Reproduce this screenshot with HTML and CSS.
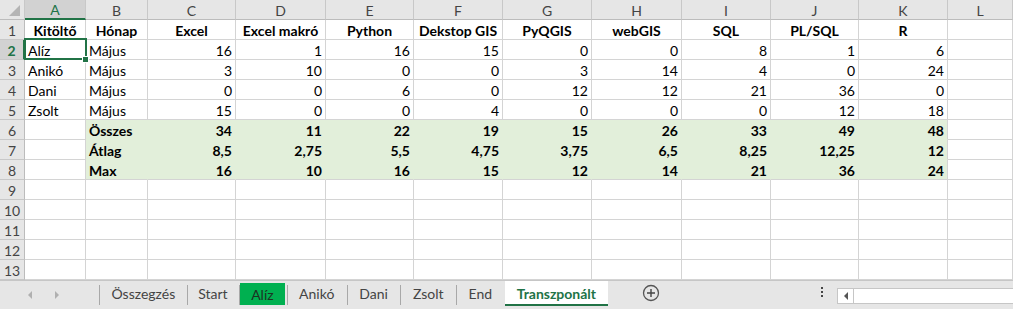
FILE: index.html
```html
<!DOCTYPE html>
<html lang="hu">
<head>
    <meta charset="UTF-8">
    <title>Transzponált</title>
    <link rel="stylesheet" href="styles.css">
</head>
<body>

    <!-- Sheet grid -->
    <div class="sheet">
        <!-- column headers -->
        <div class="hd corner"><span class="tri"></span></div>
        <div class="hd active">A</div>
        <div class="hd">B</div>
        <div class="hd">C</div>
        <div class="hd">D</div>
        <div class="hd">E</div>
        <div class="hd">F</div>
        <div class="hd">G</div>
        <div class="hd">H</div>
        <div class="hd">I</div>
        <div class="hd">J</div>
        <div class="hd">K</div>
        <div class="hd">L</div>

        <!-- row 1 -->
        <div class="rh">1</div>
        <div class="c b ctr">Kitöltő</div>
        <div class="c b ctr">Hónap</div>
        <div class="c b ctr">Excel</div>
        <div class="c b ctr">Excel makró</div>
        <div class="c b ctr">Python</div>
        <div class="c b ctr">Dekstop GIS</div>
        <div class="c b ctr">PyQGIS</div>
        <div class="c b ctr">webGIS</div>
        <div class="c b ctr">SQL</div>
        <div class="c b ctr">PL/SQL</div>
        <div class="c b ctr">R</div>
        <div class="c"></div>

        <!-- row 2 -->
        <div class="rh active">2</div>
        <div class="c sel">Alíz</div>
        <div class="c">Május</div>
        <div class="c n">16</div>
        <div class="c n">1</div>
        <div class="c n">16</div>
        <div class="c n">15</div>
        <div class="c n">0</div>
        <div class="c n">0</div>
        <div class="c n">8</div>
        <div class="c n">1</div>
        <div class="c n">6</div>
        <div class="c"></div>

        <!-- row 3 -->
        <div class="rh">3</div>
        <div class="c">Anikó</div>
        <div class="c">Május</div>
        <div class="c n">3</div>
        <div class="c n">10</div>
        <div class="c n">0</div>
        <div class="c n">0</div>
        <div class="c n">3</div>
        <div class="c n">14</div>
        <div class="c n">4</div>
        <div class="c n">0</div>
        <div class="c n">24</div>
        <div class="c"></div>

        <!-- row 4 -->
        <div class="rh">4</div>
        <div class="c">Dani</div>
        <div class="c">Május</div>
        <div class="c n">0</div>
        <div class="c n">0</div>
        <div class="c n">6</div>
        <div class="c n">0</div>
        <div class="c n">12</div>
        <div class="c n">12</div>
        <div class="c n">21</div>
        <div class="c n">36</div>
        <div class="c n">0</div>
        <div class="c"></div>

        <!-- row 5 -->
        <div class="rh">5</div>
        <div class="c">Zsolt</div>
        <div class="c">Május</div>
        <div class="c n">15</div>
        <div class="c n">0</div>
        <div class="c n">0</div>
        <div class="c n">4</div>
        <div class="c n">0</div>
        <div class="c n">0</div>
        <div class="c n">0</div>
        <div class="c n">12</div>
        <div class="c n">18</div>
        <div class="c"></div>

        <!-- row 6: summary block starts -->
        <div class="rh">6</div>
        <div class="c"></div>
        <div class="c g b">Összes</div>
        <div class="c g b n">34</div>
        <div class="c g b n">11</div>
        <div class="c g b n">22</div>
        <div class="c g b n">19</div>
        <div class="c g b n">15</div>
        <div class="c g b n">26</div>
        <div class="c g b n">33</div>
        <div class="c g b n">49</div>
        <div class="c g b n end-col">48</div>
        <div class="c"></div>

        <!-- row 7 -->
        <div class="rh">7</div>
        <div class="c"></div>
        <div class="c g b">Átlag</div>
        <div class="c g b n">8,5</div>
        <div class="c g b n">2,75</div>
        <div class="c g b n">5,5</div>
        <div class="c g b n">4,75</div>
        <div class="c g b n">3,75</div>
        <div class="c g b n">6,5</div>
        <div class="c g b n">8,25</div>
        <div class="c g b n">12,25</div>
        <div class="c g b n end-col">12</div>
        <div class="c"></div>

        <!-- row 8 -->
        <div class="rh">8</div>
        <div class="c"></div>
        <div class="c g b end-row">Max</div>
        <div class="c g b n end-row">16</div>
        <div class="c g b n end-row">10</div>
        <div class="c g b n end-row">16</div>
        <div class="c g b n end-row">15</div>
        <div class="c g b n end-row">12</div>
        <div class="c g b n end-row">14</div>
        <div class="c g b n end-row">21</div>
        <div class="c g b n end-row">36</div>
        <div class="c g b n end-row end-col">24</div>
        <div class="c"></div>

        <!-- empty rows -->
        <div class="rh">9</div>
        <div class="c"></div><div class="c"></div><div class="c"></div><div class="c"></div><div class="c"></div><div class="c"></div>
        <div class="c"></div><div class="c"></div><div class="c"></div><div class="c"></div><div class="c"></div><div class="c"></div>

        <div class="rh">10</div>
        <div class="c"></div><div class="c"></div><div class="c"></div><div class="c"></div><div class="c"></div><div class="c"></div>
        <div class="c"></div><div class="c"></div><div class="c"></div><div class="c"></div><div class="c"></div><div class="c"></div>

        <div class="rh">11</div>
        <div class="c"></div><div class="c"></div><div class="c"></div><div class="c"></div><div class="c"></div><div class="c"></div>
        <div class="c"></div><div class="c"></div><div class="c"></div><div class="c"></div><div class="c"></div><div class="c"></div>

        <div class="rh">12</div>
        <div class="c"></div><div class="c"></div><div class="c"></div><div class="c"></div><div class="c"></div><div class="c"></div>
        <div class="c"></div><div class="c"></div><div class="c"></div><div class="c"></div><div class="c"></div><div class="c"></div>

        <div class="rh">13</div>
        <div class="c"></div><div class="c"></div><div class="c"></div><div class="c"></div><div class="c"></div><div class="c"></div>
        <div class="c"></div><div class="c"></div><div class="c"></div><div class="c"></div><div class="c"></div><div class="c"></div>
    </div>

    <!-- Sheet tabs -->
    <div class="tabbar">
        <div class="tab-nav">
            <span class="arrow left"></span>
            <span class="arrow right"></span>
        </div>
        <div class="tabs">
            <div class="tab">Összegzés</div>
            <div class="tab">Start</div>
            <div class="tab colored">Alíz</div>
            <div class="tab wide">Anikó</div>
            <div class="tab wide">Dani</div>
            <div class="tab wide">Zsolt</div>
            <div class="tab wide">End</div>
            <div class="tab current">Transzponált</div>
        </div>
        <div class="add-sheet">
            <svg width="18" height="18" viewBox="0 0 18 18">
                <circle cx="9" cy="9" r="7.5" fill="none" stroke="#555" stroke-width="1.3"/>
                <path d="M9 5v8M5 9h8" stroke="#444" stroke-width="1.4"/>
            </svg>
        </div>
        <div class="dots"><span></span><span></span><span></span></div>
        <div class="hscroll">
            <div class="hscroll-btn"><span class="arrow left dark"></span></div>
        </div>
    </div>

</body>
</html>
```

FILE: styles.css
```css
body {
    margin: 0;
    padding: 0;
    width: 1013px;
    height: 309px;
    overflow: hidden;
    background: #fff;
    font-family: "Lato", "Liberation Sans", sans-serif;
    font-size: 14px;
    color: #000;
}

/* Sheet grid */
.sheet {
    display: grid;
    grid-template-columns: 25px 61px 62px 88px 90px 88px 89px 89px 90px 89px 88px 89px 65px;
    grid-template-rows: repeat(14, 20px);
    width: 1013px;
}

.sheet > div {
    box-sizing: border-box;
    border-right: 1px solid #d4d4d4;
    border-bottom: 1px solid #d4d4d4;
    display: flex;
    align-items: center;
    white-space: nowrap;
    overflow: hidden;
    padding-top: 1px;
}

.hd {
    background: #e6e6e6;
    justify-content: center;
    color: #444;
    border-right-color: #c8c8c8 !important;
    border-bottom-color: #bcbcbc !important;
}

.hd.corner {
    justify-content: flex-end;
    align-items: flex-end;
    padding: 0 4px 3px 0;
}

.tri {
    width: 0;
    height: 0;
    border-left: 11px solid transparent;
    border-bottom: 11px solid #b4b4b4;
}

.hd.active {
    background: #d2d2d2;
    color: #217346;
    border-bottom: 2px solid #217346 !important;
}

.rh {
    background: #e6e6e6;
    justify-content: center;
    color: #444;
    border-right-color: #bcbcbc !important;
    border-bottom-color: #c8c8c8 !important;
}

.rh.active {
    background: #d2d2d2;
    color: #217346;
    font-weight: bold;
    border-right: 2px solid #217346 !important;
}

.c {
    padding-left: 3px;
    padding-right: 3px;
}

.n {
    justify-content: flex-end;
}

.ctr {
    justify-content: center;
}

.b {
    font-weight: bold;
}

/* green summary block */
.g {
    background: #e2efda;
    border-color: #e2efda !important;
}

.g.end-col {
    border-right-color: #d4d4d4 !important;
}

.g.end-row {
    border-bottom-color: #d4d4d4 !important;
}

/* selected cell A2 */
.sel {
    position: relative;
    overflow: visible !important;
}

.sel::after {
    content: "";
    position: absolute;
    left: -1px;
    top: -2px;
    right: -2px;
    bottom: -1px;
    border: 2px solid #217346;
    z-index: 2;
}

.sel::before {
    content: "";
    position: absolute;
    right: -4px;
    bottom: -4px;
    width: 5px;
    height: 5px;
    background: #217346;
    border: 1px solid #fff;
    z-index: 3;
}

/* Tab bar */
.tabbar {
    display: flex;
    align-items: flex-start;
    height: 29px;
    background: #e6e6e6;
    border-top: 1px solid #c6c6c6;
    box-sizing: border-box;
}

.tab-nav {
    width: 100px;
    display: flex;
    align-items: center;
    padding-left: 28px;
    gap: 23px;
    box-sizing: border-box;
    border-right: 1px solid #a8a8a8;
    margin-top: 4px;
    height: 20px;
}

.arrow {
    width: 0;
    height: 0;
    border-top: 4px solid transparent;
    border-bottom: 4px solid transparent;
}

.arrow.left {
    border-right: 4px solid #b0b0b0;
}

.arrow.right {
    border-left: 4px solid #b0b0b0;
}

.arrow.left.dark {
    border-right-color: #555;
}

.tabs {
    display: flex;
}

.tab {
    height: 24px;
    padding: 0 11.5px;
    display: flex;
    align-items: center;
    color: #444;
    position: relative;
}

.tab.wide {
    padding: 0 12.5px;
}

.tab::after {
    content: "";
    position: absolute;
    right: -1px;
    top: 4px;
    height: 20px;
    border-right: 1px solid #a8a8a8;
}

.tab.colored {
    background: #00b050;
    color: #1c3322;
    margin: 2px 2px 0 1px;
    height: 22px;
    padding: 0 11px;
}

.tab.colored::after {
    right: -3px;
    top: 2px;
}

.tab.current {
    background: #fff;
    color: #217346;
    font-weight: bold;
    border-bottom: 2px solid #217346;
    height: 25px;
    box-sizing: border-box;
    padding: 2px 12px 0;
}

.tab.current::after {
    display: none;
}

.add-sheet {
    margin-left: 34px;
    margin-top: 3px;
    width: 18px;
    height: 18px;
}

.dots {
    margin-left: 161px;
    margin-top: 6px;
    display: flex;
    flex-direction: column;
    gap: 2px;
}

.dots span {
    width: 2px;
    height: 2px;
    background: #444;
}

.hscroll {
    margin-left: 14px;
    margin-top: 7px;
    flex: 1;
    height: 16px;
    background: #fff;
    border: 1px solid #c6c6c6;
    border-right: none;
    box-sizing: border-box;
    display: flex;
}

.hscroll-btn {
    width: 15px;
    height: 100%;
    border-right: 1px solid #c6c6c6;
    display: flex;
    align-items: center;
    justify-content: center;
}
```
